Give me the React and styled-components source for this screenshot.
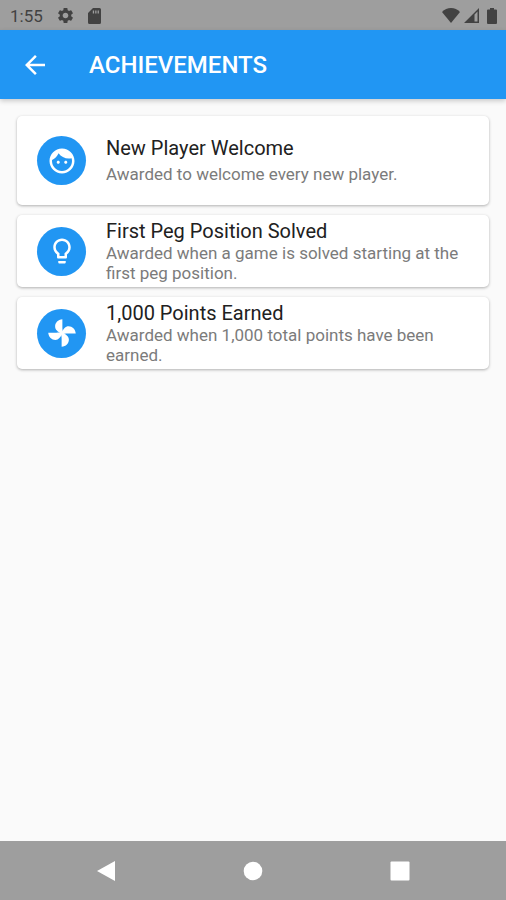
import React from 'react';
import styled, { createGlobalStyle } from 'styled-components';
import { MdArrowBack, MdLightbulbOutline, MdSettings } from 'react-icons/md';

const FaceIcon = () => (
  <svg viewBox="0 0 24 24" fill="currentColor" aria-hidden="true">
    <path d="M9 11.750c-.69 0-1.250.56-1.250 1.250s.56 1.250 1.250 1.250 1.250-.56 1.250-1.250-.56-1.250-1.250-1.250zm6 0c-.69 0-1.250.56-1.250 1.250s.56 1.250 1.250 1.250 1.250-.56 1.250-1.250-.56-1.250-1.250-1.250zM12 2C6.480 2 2 6.480 2 12s4.480 10 10 10 10-4.480 10-10S17.520 2 12 2zm0 18c-4.410 0-8-3.590-8-8 0-.29.02-.58.05-.86 2.360-1.050 4.230-2.980 5.210-5.370C11.070 8.330 14.050 10 17.420 10c.78 0 1.530-.09 2.250-.26.21.71.33 1.470.33 2.260 0 4.410-3.590 8-8 8z" />
  </svg>
);

const PinwheelIcon = () => (
  <svg viewBox="0 0 24 24" fill="currentColor" aria-hidden="true">
    {[0, 90, 180, 270].map((angle) => (
      <path
        key={angle}
        transform={`rotate(${angle} 12 12)`}
        d="M12.300 1C8.800 1.300 6.500 3.800 6.500 6.700c0 2.600 2 4.100 5.500 5.800l1-.5c-.4-1.500-.7-2.800-.7-4.500z"
      />
    ))}
  </svg>
);

const achievements = [
  {
    id: 1,
    icon: <FaceIcon />,
    title: 'New Player Welcome',
    text: 'Awarded to welcome every new player.',
    roomy: true,
  },
  {
    id: 2,
    icon: <MdLightbulbOutline />,
    title: 'First Peg Position Solved',
    text: 'Awarded when a game is solved starting at the first peg position.',
  },
  {
    id: 3,
    icon: <PinwheelIcon />,
    title: '1,000 Points Earned',
    text: 'Awarded when 1,000 total points have been earned.',
  },
];

const App = () => {
  return (
    <>
      <GlobalStyle />
      <Screen>
        <StatusBar>
          <time>1:55</time>
          <MdSettings size={19} />
          <svg width="13" height="16" viewBox="0 0 13 16" fill="currentColor">
            <path
              d="M5 0h6.500A1.500 1.500 0 0 1 13 1.500v13a1.500 1.500 0 0 1-1.500 1.500h-10A1.500 1.500 0 0 1 0 14.500V5zM4.800 2.500v3h1.300v-3zM7.200 2.500v3h1.300v-3zM9.600 2.500v3h1.300v-3z"
              fillRule="evenodd"
            />
          </svg>
          <StatusRight>
            <svg width="18" height="15" viewBox="0 0 18 15" fill="currentColor">
              <path d="M9 15L0 4C2.500 1.500 5.500 0 9 0s6.500 1.500 9 4z" />
            </svg>
            <svg width="15" height="15" viewBox="0 0 15 15" fill="currentColor">
              <path d="M0 15L15 0v15zM10.500 6.500v7h3V3.500z" fillRule="evenodd" />
            </svg>
            <svg width="10" height="16" viewBox="0 0 10 16" fill="currentColor">
              <path d="M3 0h4v1.600h2a1 1 0 0 1 1 1V15a1 1 0 0 1-1 1H1a1 1 0 0 1-1-1V2.600a1 1 0 0 1 1-1h2z" />
            </svg>
          </StatusRight>
        </StatusBar>
        <AppBar>
          <BackButton type="button" aria-label="Back">
            <MdArrowBack size={30} />
          </BackButton>
          <h1>ACHIEVEMENTS</h1>
        </AppBar>
        <List>
          {achievements.map((item) => {
            const { id, icon, title, text, roomy } = item;
            return (
              <Card key={id} $roomy={roomy}>
                <Avatar>{icon}</Avatar>
                <div>
                  <h2>{title}</h2>
                  <p>{text}</p>
                </div>
              </Card>
            );
          })}
        </List>
        <NavBar>
          <button type="button" aria-label="Back">
            <svg width="20" height="22" viewBox="0 0 20 22" fill="currentColor">
              <path d="M19 1v20L1 11z" />
            </svg>
          </button>
          <button type="button" aria-label="Home">
            <svg width="20" height="20" viewBox="0 0 20 20" fill="currentColor">
              <circle cx="10" cy="10" r="9.300" />
            </svg>
          </button>
          <button type="button" aria-label="Recent apps">
            <svg width="20" height="20" viewBox="0 0 20 20" fill="currentColor">
              <rect x="0.500" y="0.500" width="19" height="19" rx="1" />
            </svg>
          </button>
        </NavBar>
      </Screen>
    </>
  );
};

const GlobalStyle = createGlobalStyle`
  * {
    box-sizing: border-box;
  }
  body {
    margin: 0;
    font-family: Roboto, sans-serif;
    background-color: #fafafa;
  }
  h1, h2, p {
    margin: 0;
  }
  button {
    padding: 0;
    border: none;
    background: none;
    color: #fff;
    cursor: pointer;
  }
  svg {
    display: block;
    flex-shrink: 0;
  }
`;

const Screen = styled.div`
  display: flex;
  flex-direction: column;
  min-height: 100vh;
`;

const StatusBar = styled.div`
  display: flex;
  align-items: center;
  gap: 13px;
  height: 30px;
  padding: 1px 9px 0 10px;
  background-color: #9e9e9e;
  color: #424242;

  time {
    font-size: 17px;
  }
`;

const StatusRight = styled.div`
  display: flex;
  align-items: center;
  gap: 4px;
  margin-left: auto;

  svg:last-child {
    margin-left: 4px;
  }
`;

const AppBar = styled.header`
  display: flex;
  align-items: center;
  gap: 20px;
  height: 69px;
  background-color: #2196f3;
  color: #fff;
  box-shadow: 0 2px 5px rgba(0, 0, 0, 0.2);

  h1 {
    font-size: 24px;
    font-weight: 500;
    line-height: 28px;
  }
`;

const BackButton = styled.button`
  display: flex;
  align-items: center;
  justify-content: center;
  width: 69px;
  height: 69px;
`;

const List = styled.main`
  flex: 1;
  display: flex;
  flex-direction: column;
  gap: 10px;
  padding: 17px;
`;

const Card = styled.article`
  display: flex;
  align-items: center;
  gap: 20px;
  min-height: ${({ $roomy }) => ($roomy ? '89px' : '72px')};
  padding: 4px 20px;
  border-radius: 5px;
  background-color: #fff;
  box-shadow: 0 1px 3px rgba(0, 0, 0, 0.3);

  h2 {
    font-size: 20px;
    font-weight: 400;
    line-height: 23px;
    color: #212121;
  }
  p {
    margin-top: ${({ $roomy }) => ($roomy ? '4px' : '0')};
    font-size: 17px;
    line-height: 20px;
    color: #7b7b7b;
  }
`;

const Avatar = styled.div`
  display: flex;
  align-items: center;
  justify-content: center;
  flex-shrink: 0;
  width: 49px;
  height: 49px;
  border-radius: 50%;
  background-color: #2196f3;
  color: #fff;

  svg {
    width: 30px;
    height: 30px;
  }
`;

const NavBar = styled.nav`
  display: flex;
  height: 59px;
  padding: 0 33px;
  background-color: #9e9e9e;

  button {
    flex: 1;
    display: flex;
    align-items: center;
    justify-content: center;
  }
`;

export default App;
